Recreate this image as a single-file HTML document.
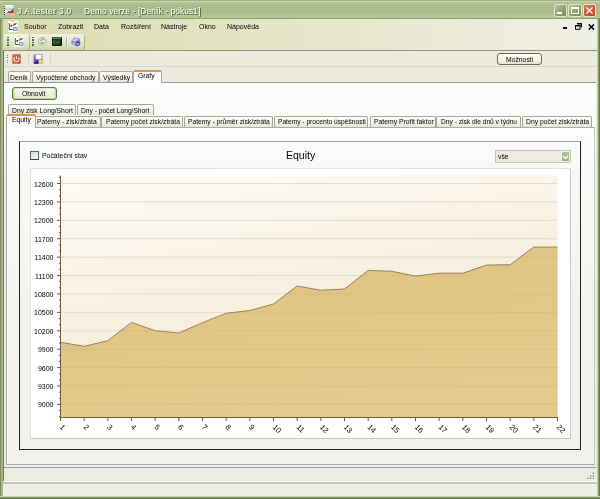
<!DOCTYPE html>
<html><head><meta charset="utf-8">
<style>
*{margin:0;padding:0;box-sizing:border-box}
html,body{width:600px;height:499px;overflow:hidden;background:#8a9c6a}
body{position:relative;font-family:"Liberation Sans",sans-serif;font-size:6.8px;color:#000}
.a{position:absolute}
.tx{will-change:transform;position:absolute;white-space:nowrap;font-size:6.8px;line-height:8px;color:#000}
#title{left:0;top:0;width:600px;height:19px;background:linear-gradient(#9fb17f 0,#9fb17f 1px,#cad6ab 1px,#cad6ab 2px,#b8c798 2px,#acbc8a 5px,#abbb8a 13px,#b8c799 16px,#b4c495 18px,#8c9c6c 18px)}
.tt{will-change:transform;position:absolute;top:5.5px;font-size:8.8px;line-height:11px;color:#fff;text-shadow:1px 1px 0 #4a562f;white-space:pre}
#winL{left:0;top:19px;width:3px;height:480px;background:linear-gradient(90deg,#7a9458 0,#7a9458 1px,#a3b585 1px,#a3b585 2px,#b0b495 2px)}
#winR{left:597px;top:19px;width:3px;height:480px;background:linear-gradient(90deg,#c8d0b0 0,#c8d0b0 1px,#8a9c6a 1px,#8a9c6a 2px,#627a44 2px)}
#winB{left:0;top:496px;width:600px;height:3px;background:linear-gradient(#c8d0b0 0,#c8d0b0 1px,#8a9c6a 1px,#8a9c6a 2px,#627a44 2px)}
#menubar{left:3px;top:19px;width:594px;height:31px;background:linear-gradient(90deg,#dcdcb0,#f0efe4)}
#mdi{left:3px;top:50px;width:594px;height:432px;background:#ecebde;border-left:1px solid #6e7560;border-top:1px solid #8f8f82}
.tb{height:16px;border-radius:3px;background:linear-gradient(#f2f4e4,#e3e8cc 50%,#cdd6ae);box-shadow:1px 1px 0 #a8b08a}
.grip{width:1.5px;height:9px;background:repeating-linear-gradient(#56643f 0,#56643f 1.2px,transparent 1.2px,transparent 2.5px)}
.sep{width:1px;height:12px;background:#d2d0c2;box-shadow:1px 0 0 #f8f8f2}
.btn{position:absolute;border:1px solid #5f6e47;border-radius:3px;background:linear-gradient(#fefef8,#f2f1e2 70%,#e3e1cc)}
.tab{position:absolute;height:11px;border:1px solid #a6a8a0;border-bottom:none;border-radius:2px 2px 0 0;background:linear-gradient(#fefefc,#f3f2e8 60%,#e9e7da)}
.tab.sel{background:#fcfcfe;border-top:2px solid #dc9550;z-index:2}
#panel{left:4px;top:82px;width:592px;height:386px;border-top:1px solid #9a9c98;border-bottom:1px solid #9a9c98;background:linear-gradient(#fcfcfe 0,#fafafa 40px,#eef0ec 100px,#eef0ec)}
#panel2{left:6px;top:127px;width:589px;height:338px;border:1px solid #a6a6aa;border-top-color:#a8aaa8;border-right-color:#c6c6c4;border-bottom-color:#a8aaa8;background:linear-gradient(#fcfcfe 0,#f7f7f5 60px,#f3f3ee 170px,#f2f1ec);box-shadow:inset 1px 1px 0 #fff}
#frame{left:19px;top:141px;width:562px;height:309px;border:1px solid #202020;border-top-color:#a4a4a4;box-shadow:0 0 0 1px #f8f8f6}
#status1{left:4px;top:468px;width:593px;height:13px;background:#edece1}
#status2{left:3px;top:481px;width:594px;height:15px;background:linear-gradient(#f8f8f0 0,#f8f8f0 1px,#c6c5ba 1px,#c6c5ba 3px,#efeee4 3px,#efeee4)}
</style></head><body>
<div id="title" class="a">
<div class="tt" style="left:17px;font-size:8.4px;letter-spacing:0.38px">J.A.tester 3.0</div>
<div class="tt" style="left:83.5px;font-size:8.3px;letter-spacing:0.14px">Demo verze - [Deník - pokus1]</div>
<svg class="a" style="left:4px;top:5px" width="10" height="10" viewBox="0 0 10 10"><rect x="0.5" y="0" width="9" height="10" fill="#f4f8f8"/><rect x="0.5" y="2.5" width="9" height="3" fill="#a8e0e8"/><polygon points="2.5,8 5,6 6.5,6.5 9.5,3 9.5,8" fill="#d8181a"/><rect x="0.5" y="8" width="9" height="2" fill="#c8c8c0"/><g fill="#2c4040"><rect x="0" y="1" width="1" height="1"/><rect x="0" y="3" width="1" height="1"/><rect x="0" y="5" width="1" height="1"/><rect x="0" y="7" width="1" height="1"/><rect x="0" y="9" width="1" height="1"/></g></svg>
<div class="a" style="left:554px;top:4px;width:13px;height:13px;border:1px solid #dfe7cf;border-radius:2px;background:linear-gradient(135deg,#bcc8a0,#8c9c68 65%,#7a8a56)"><div class="a" style="left:2px;top:7px;width:5px;height:2px;background:#fff"></div></div>
<div class="a" style="left:568px;top:4px;width:14px;height:13px;border:1px solid #dfe7cf;border-radius:2px;background:linear-gradient(135deg,#bcc8a0,#8c9c68 65%,#7a8a56)"><div class="a" style="left:2px;top:2px;width:8px;height:7px;border:1px solid #fff;border-top-width:2px"></div></div>
<div class="a" style="left:583px;top:4px;width:13px;height:13px;border:1px solid #efe0c8;border-radius:2px;background:linear-gradient(135deg,#e07a58,#c8522e 65%,#b8452a)"><svg class="a" style="left:1px;top:1px" width="9" height="9" viewBox="0 0 9 9"><path d="M1.5 1.5L7.5 7.5M7.5 1.5L1.5 7.5" stroke="#fff" stroke-width="1.3"/></svg></div>
</div>
<div id="winL" class="a"></div><div id="winR" class="a"></div><div id="winB" class="a"></div>
<div id="menubar" class="a"></div>
<svg class="a" style="left:8px;top:21px" width="11" height="11" viewBox="0 0 11 11"><rect x="0" y="0" width="10" height="11" fill="#fbfcf8"/><rect x="3" y="0.3" width="3" height="0.8" fill="#b8b8b0"/><path d="M1.3 2v6.5h3.5" stroke="#3a3a3a" fill="none" stroke-width="0.9"/><circle cx="3.3" cy="4.8" r="0.9" fill="#111"/><path d="M5.3 4.8L6.3 2.8L7.5 3.5L8.4 1.8" stroke="#a84848" stroke-width="1.2" fill="none"/><rect x="5.2" y="6.2" width="4.3" height="3.8" fill="#6f8cb0"/><rect x="6" y="7.2" width="2.8" height="2" fill="#c8d8ec"/></svg>
<div class="tx" style="left:24px;top:23px;font-size:7px">Soubor</div>
<div class="tx" style="left:58px;top:23px;font-size:7px">Zobrazit</div>
<div class="tx" style="left:94px;top:23px;font-size:7px">Data</div>
<div class="tx" style="left:121px;top:23px;font-size:7px">Rozšíření</div>
<div class="tx" style="left:161px;top:23px;font-size:7px">Nástroje</div>
<div class="tx" style="left:199px;top:23px;font-size:7px">Okno</div>
<div class="tx" style="left:227px;top:23px;font-size:7px">Nápověda</div>
<div class="a" style="left:563px;top:27px;width:4px;height:2px;background:#000"></div>
<svg class="a" style="left:575px;top:23px" width="7" height="7" viewBox="0 0 7 7"><path d="M2 0.5h4.5v4" stroke="#000" fill="none" stroke-width="1"/><rect x="2" y="0" width="5" height="1.5" fill="#000"/><rect x="0.5" y="2.5" width="4.5" height="3.8" fill="none" stroke="#000" stroke-width="1"/><rect x="0" y="2" width="5.5" height="1.5" fill="#000"/></svg>
<svg class="a" style="left:588px;top:24px" width="7" height="6" viewBox="0 0 7 6"><path d="M0.8 0.5L6 5.5M6 0.5L0.8 5.5" stroke="#000" stroke-width="1.6"/></svg>
<div class="a tb" style="left:4px;top:34px;width:25px"></div>
<div class="a tb" style="left:30px;top:34px;width:54px"></div>
<div class="a grip" style="left:7px;top:37px"></div>
<div class="a grip" style="left:32px;top:37px"></div>
<svg class="a" style="left:14px;top:36px" width="11" height="11" viewBox="0 0 11 11"><rect x="0" y="0" width="10" height="11" fill="#fbfcf8"/><rect x="3" y="0.3" width="3" height="0.8" fill="#b8b8b0"/><path d="M1.3 2v6.5h3.5" stroke="#3a3a3a" fill="none" stroke-width="0.9"/><circle cx="3.3" cy="4.8" r="0.9" fill="#111"/><path d="M5.3 4.8L6.3 2.8L7.5 3.5L8.4 1.8" stroke="#a84848" stroke-width="1.2" fill="none"/><rect x="5.2" y="6.2" width="4.3" height="3.8" fill="#6f8cb0"/><rect x="6" y="7.2" width="2.8" height="2" fill="#c8d8ec"/></svg>
<svg class="a" style="left:38px;top:37px" width="9" height="9" viewBox="0 0 9 9"><circle cx="4.3" cy="4.3" r="3.7" fill="#f2f4ee" stroke="#a9b3a0" stroke-width="1.1"/><path d="M2.3 5.6C3.2 6.6 5 6.4 5.6 5.2M6.3 3C5.4 2 3.6 2.2 3 3.4" stroke="#4f8a48" fill="none" stroke-width="1"/><path d="M5.6 4.2l0.4 1.6l-1.5-0.3zM3 4.4L2.6 2.8l1.5 0.3z" fill="#4f8a48"/></svg>
<svg class="a" style="left:52px;top:37px" width="10" height="9" viewBox="0 0 10 9"><rect x="0" y="0" width="10" height="9" rx="0.8" fill="#101410"/><rect x="1" y="0.5" width="8" height="1.3" fill="#8a9088"/><rect x="1" y="2.2" width="8" height="5.8" fill="#1a3c1c"/><path d="M3.3 3.8a1.3 1.3 0 1 0 0 2.2M5 4.5v1.5M6.5 4.5v1.5" stroke="#58c060" stroke-width="0.7" fill="none"/></svg>
<div class="a" style="left:66px;top:37px;width:1px;height:10px;background:#a9b091;box-shadow:1px 0 0 #f6f8ee"></div>
<svg class="a" style="left:70px;top:36px" width="11" height="11" viewBox="0 0 11 11"><path d="M1 5.5L4.5 1.2L9.8 2.8L10.5 7.5L6.5 10.5L1.5 8z" fill="#8f92d8"/><path d="M2.5 5L5 2.3L8 3.2L6 5.3z" fill="#d0d2f4"/><path d="M3 7.2L5 6.2L6.2 7.5L4 8.5z" fill="#c4c6f0"/><circle cx="7.8" cy="7.6" r="2.4" fill="#2c3a98"/><path d="M6.6 6.8l0.5 1.8l0.7-1.2l0.7 1.2l0.5-1.8" stroke="#fff" stroke-width="0.6" fill="none"/></svg>
<div id="mdi" class="a"></div>
<div class="a" style="left:4px;top:66px;width:593px;height:1px;background:#d8d6cc"></div>
<div class="a grip" style="left:7px;top:55px;height:8px;width:1px;background:repeating-linear-gradient(#7c7c70 0,#7c7c70 1px,transparent 1px,transparent 2.5px)"></div>
<div class="a" style="left:12px;top:54px;width:9px;height:10px;border-radius:1.5px;background:linear-gradient(135deg,#d86a48,#c04a2c);box-shadow:inset 0 0 0 0.6px #e89a80"><svg class="a" style="left:0;top:0" width="9" height="10" viewBox="0 0 9 10"><path d="M2.83 3.21A2.6 2.6 0 1 0 6.17 3.21" stroke="#fbe8e0" fill="none" stroke-width="1.1"/><path d="M4.5 2.3v2.9" stroke="#fbe8e0" stroke-width="1"/></svg></div>
<div class="a" style="left:28px;top:53px;width:1px;height:12px;background:#d6d4c6"></div>
<svg class="a" style="left:33px;top:54px" width="10" height="10" viewBox="0 0 10 10"><defs><linearGradient id="sv" x1="0" y1="0" x2="0" y2="1"><stop offset="0" stop-color="#a0a0e0"/><stop offset="1" stop-color="#4040a8"/></linearGradient></defs><rect x="0.5" y="0" width="9" height="10" rx="0.8" fill="url(#sv)"/><rect x="3" y="0.8" width="5.5" height="4.5" fill="#fcfcff"/><path d="M1.5 9.5L5 5.5L6 9.5z" fill="#20206a"/><rect x="5.5" y="5.8" width="4.2" height="4.2" rx="0.6" fill="#e6c45a"/><rect x="6.3" y="6.5" width="2.6" height="1.4" fill="#f8ecb0"/></svg>
<div class="a" style="left:50px;top:53px;width:1px;height:12px;background:#d6d4c6"></div>
<div class="btn" style="left:497px;top:52.5px;width:45px;height:12.5px"><div class="tx" style="left:8px;top:2px">Možnosti</div></div>
<div id="panel" class="a"></div>
<div class="tab" style="left:8px;top:71px;width:23px"><div class="tx" style="left:0.5px;top:2px">Deník</div></div>
<div class="tab" style="left:32px;top:71px;width:67px"><div class="tx" style="left:2.7px;top:2px">Vypočtené obchody</div></div>
<div class="tab" style="left:99px;top:71px;width:34px"><div class="tx" style="left:3px;top:2px">Výsledky</div></div>
<div class="tab sel" style="left:133px;top:70px;width:29px;height:13px"><div class="tx" style="left:3.5px;top:0px">Grafy</div></div>
<div class="btn" style="left:12px;top:87px;width:45px;height:12.5px;border-color:#5c7544;background:linear-gradient(#f6f7ee,#eeeee2 60%,#e2e4d0);box-shadow:inset 1.5px 0 0 #c4de9c,inset -1.5px 0 0 #c4de9c,inset 0 1px 0 #dcebc4,inset 0 -1px 0 #b4d08c"><div class="tx" style="left:9px;top:2px">Obnovit</div></div>
<div id="panel2" class="a"></div>
<div class="tab" style="left:8px;top:104px;width:68px"><div class="tx" style="left:3px;top:2px">Dny zisk Long/Short</div></div>
<div class="tab" style="left:77px;top:104px;width:77px"><div class="tx" style="left:2.8px;top:2px;font-size:6.65px">Dny - počet Long/Short</div></div>
<div class="tab sel" style="left:6px;top:114px;width:30px;height:14px"><div class="tx" style="left:5px;top:-0.5px">Equity</div></div>
<div class="tab" style="left:35px;top:116px;width:66px"><div class="tx" style="left:1.3px;top:1px">Patemy - zisk/ztráta</div></div>
<div class="tab" style="left:101px;top:116px;width:82px"><div class="tx" style="left:3.5px;top:1px">Patemy počet zisk/ztráta</div></div>
<div class="tab" style="left:184px;top:116px;width:89px"><div class="tx" style="left:2.5px;top:1px;font-size:6.7px">Patemy - průměr zisk/ztráta</div></div>
<div class="tab" style="left:274px;top:116px;width:94px"><div class="tx" style="left:2.5px;top:1px;font-size:6.65px">Patemy - procento úspěšnosti</div></div>
<div class="tab" style="left:370px;top:116px;width:66px"><div class="tx" style="left:2.8px;top:1px">Patemy Profit faktor</div></div>
<div class="tab" style="left:436px;top:116px;width:85px"><div class="tx" style="left:3.8px;top:1px;font-size:6.65px">Dny - zisk dle dnů v týdnu</div></div>
<div class="tab" style="left:522px;top:116px;width:70px"><div class="tx" style="left:2.5px;top:1px">Dny počet zisk/ztráta</div></div>
<div id="frame" class="a"></div>
<div class="a" style="left:30px;top:151px;width:8.5px;height:9px;border:1px solid #56647a;border-bottom-color:#3a4656;background:linear-gradient(135deg,#d8d8d0,#fcfcfa)"></div>
<div class="tx" style="left:41.8px;top:152px;font-size:6.9px">Počáteční stav</div>
<div class="tx" style="left:286px;top:149px;font-size:10.5px;line-height:13px">Equity</div>
<div class="a" style="left:495px;top:150px;width:76px;height:12.5px;border:1px solid #bfcba8;background:#eeece2"><div class="tx" style="left:1.5px;top:1.5px">vše</div><div class="a" style="left:65px;top:0;width:9px;height:10.5px;border:1px solid #f0f2e6;background:linear-gradient(#b2c298,#97ab7b)"><svg class="a" style="left:0;top:1.5px" width="7" height="7" viewBox="0 0 7 7"><path d="M1 2l2.5 2.5L6 2" stroke="#fff" fill="none" stroke-width="1.3"/></svg></div></div>
<svg class="a" style="left:0;top:0;will-change:transform" width="600" height="499" viewBox="0 0 600 499">
<defs><linearGradient id="pbg" x1="0" y1="0" x2="0.35" y2="1"><stop offset="0" stop-color="#fdfaf4"/><stop offset="1" stop-color="#f4e8d2"/></linearGradient>
<linearGradient id="afill" x1="0" y1="0" x2="0.4" y2="1"><stop offset="0" stop-color="#dfc283"/><stop offset="1" stop-color="#e4c98c"/></linearGradient></defs>
<rect x="30.5" y="168.5" width="540" height="270" fill="#fff" stroke="#e2e2dc" stroke-width="1"/><path d="M570.5 168.5V438.5H30.5" fill="none" stroke="#c9c9c3" stroke-width="1"/>
<rect x="60.5" y="175.5" width="497.0" height="242.0" fill="url(#pbg)"/>
<line x1="60.5" y1="183.50" x2="557.5" y2="183.50" stroke="#e6dcc8" stroke-width="1"/>
<line x1="60.5" y1="201.91" x2="557.5" y2="201.91" stroke="#e6dcc8" stroke-width="1"/>
<line x1="60.5" y1="220.32" x2="557.5" y2="220.32" stroke="#e6dcc8" stroke-width="1"/>
<line x1="60.5" y1="238.73" x2="557.5" y2="238.73" stroke="#e6dcc8" stroke-width="1"/>
<line x1="60.5" y1="257.14" x2="557.5" y2="257.14" stroke="#e6dcc8" stroke-width="1"/>
<line x1="60.5" y1="275.55" x2="557.5" y2="275.55" stroke="#e6dcc8" stroke-width="1"/>
<line x1="60.5" y1="293.96" x2="557.5" y2="293.96" stroke="#e6dcc8" stroke-width="1"/>
<line x1="60.5" y1="312.37" x2="557.5" y2="312.37" stroke="#e6dcc8" stroke-width="1"/>
<line x1="60.5" y1="330.78" x2="557.5" y2="330.78" stroke="#e6dcc8" stroke-width="1"/>
<line x1="60.5" y1="349.19" x2="557.5" y2="349.19" stroke="#e6dcc8" stroke-width="1"/>
<line x1="60.5" y1="367.60" x2="557.5" y2="367.60" stroke="#e6dcc8" stroke-width="1"/>
<line x1="60.5" y1="386.01" x2="557.5" y2="386.01" stroke="#e6dcc8" stroke-width="1"/>
<line x1="60.5" y1="404.42" x2="557.5" y2="404.42" stroke="#e6dcc8" stroke-width="1"/>
<clipPath id="ac"><polygon points="60.5,417.5 60.5,342.3 84.2,346.3 107.8,340.7 131.5,322.4 155.2,330.7 178.8,333.0 202.5,322.7 226.2,313.3 249.8,310.5 273.5,304.0 297.2,286.0 320.8,290.3 344.5,289.0 368.2,270.4 391.8,271.3 415.5,276.1 439.2,273.2 462.8,273.2 486.5,265.1 510.2,264.7 533.8,247.1 557.5,247.1 557.5,417.5"/></clipPath>
<polygon points="60.5,417.5 60.5,342.3 84.2,346.3 107.8,340.7 131.5,322.4 155.2,330.7 178.8,333.0 202.5,322.7 226.2,313.3 249.8,310.5 273.5,304.0 297.2,286.0 320.8,290.3 344.5,289.0 368.2,270.4 391.8,271.3 415.5,276.1 439.2,273.2 462.8,273.2 486.5,265.1 510.2,264.7 533.8,247.1 557.5,247.1 557.5,417.5" fill="url(#afill)"/>
<line x1="60.5" y1="257.14" x2="557.5" y2="257.14" stroke="#d9be80" stroke-width="1" clip-path="url(#ac)"/>
<line x1="60.5" y1="275.55" x2="557.5" y2="275.55" stroke="#d9be80" stroke-width="1" clip-path="url(#ac)"/>
<line x1="60.5" y1="293.96" x2="557.5" y2="293.96" stroke="#d9be80" stroke-width="1" clip-path="url(#ac)"/>
<line x1="60.5" y1="312.37" x2="557.5" y2="312.37" stroke="#d9be80" stroke-width="1" clip-path="url(#ac)"/>
<line x1="60.5" y1="330.78" x2="557.5" y2="330.78" stroke="#d9be80" stroke-width="1" clip-path="url(#ac)"/>
<line x1="60.5" y1="349.19" x2="557.5" y2="349.19" stroke="#d9be80" stroke-width="1" clip-path="url(#ac)"/>
<line x1="60.5" y1="367.60" x2="557.5" y2="367.60" stroke="#d9be80" stroke-width="1" clip-path="url(#ac)"/>
<line x1="60.5" y1="386.01" x2="557.5" y2="386.01" stroke="#d9be80" stroke-width="1" clip-path="url(#ac)"/>
<line x1="60.5" y1="404.42" x2="557.5" y2="404.42" stroke="#d9be80" stroke-width="1" clip-path="url(#ac)"/>
<polyline points="60.5,342.3 84.2,346.3 107.8,340.7 131.5,322.4 155.2,330.7 178.8,333.0 202.5,322.7 226.2,313.3 249.8,310.5 273.5,304.0 297.2,286.0 320.8,290.3 344.5,289.0 368.2,270.4 391.8,271.3 415.5,276.1 439.2,273.2 462.8,273.2 486.5,265.1 510.2,264.7 533.8,247.1 557.5,247.1" fill="none" stroke="#9a8252" stroke-width="1"/>
<line x1="60.5" y1="175.5" x2="60.5" y2="418.0" stroke="#675b44" stroke-width="1"/>
<line x1="60.5" y1="417.5" x2="558.0" y2="417.5" stroke="#675b44" stroke-width="1"/>
<line x1="57" y1="183.50" x2="60.5" y2="183.50" stroke="#675b44" stroke-width="1"/>
<text x="53.5" y="186.5" text-anchor="end" font-size="7" font-family="Liberation Sans" fill="#000">12600</text>
<line x1="57" y1="201.91" x2="60.5" y2="201.91" stroke="#675b44" stroke-width="1"/>
<text x="53.5" y="204.9" text-anchor="end" font-size="7" font-family="Liberation Sans" fill="#000">12300</text>
<line x1="57" y1="220.32" x2="60.5" y2="220.32" stroke="#675b44" stroke-width="1"/>
<text x="53.5" y="223.3" text-anchor="end" font-size="7" font-family="Liberation Sans" fill="#000">12000</text>
<line x1="57" y1="238.73" x2="60.5" y2="238.73" stroke="#675b44" stroke-width="1"/>
<text x="53.5" y="241.7" text-anchor="end" font-size="7" font-family="Liberation Sans" fill="#000">11700</text>
<line x1="57" y1="257.14" x2="60.5" y2="257.14" stroke="#675b44" stroke-width="1"/>
<text x="53.5" y="260.1" text-anchor="end" font-size="7" font-family="Liberation Sans" fill="#000">11400</text>
<line x1="57" y1="275.55" x2="60.5" y2="275.55" stroke="#675b44" stroke-width="1"/>
<text x="53.5" y="278.6" text-anchor="end" font-size="7" font-family="Liberation Sans" fill="#000">11100</text>
<line x1="57" y1="293.96" x2="60.5" y2="293.96" stroke="#675b44" stroke-width="1"/>
<text x="53.5" y="297.0" text-anchor="end" font-size="7" font-family="Liberation Sans" fill="#000">10800</text>
<line x1="57" y1="312.37" x2="60.5" y2="312.37" stroke="#675b44" stroke-width="1"/>
<text x="53.5" y="315.4" text-anchor="end" font-size="7" font-family="Liberation Sans" fill="#000">10500</text>
<line x1="57" y1="330.78" x2="60.5" y2="330.78" stroke="#675b44" stroke-width="1"/>
<text x="53.5" y="333.8" text-anchor="end" font-size="7" font-family="Liberation Sans" fill="#000">10200</text>
<line x1="57" y1="349.19" x2="60.5" y2="349.19" stroke="#675b44" stroke-width="1"/>
<text x="53.5" y="352.2" text-anchor="end" font-size="7" font-family="Liberation Sans" fill="#000">9900</text>
<line x1="57" y1="367.60" x2="60.5" y2="367.60" stroke="#675b44" stroke-width="1"/>
<text x="53.5" y="370.6" text-anchor="end" font-size="7" font-family="Liberation Sans" fill="#000">9600</text>
<line x1="57" y1="386.01" x2="60.5" y2="386.01" stroke="#675b44" stroke-width="1"/>
<text x="53.5" y="389.0" text-anchor="end" font-size="7" font-family="Liberation Sans" fill="#000">9300</text>
<line x1="57" y1="404.42" x2="60.5" y2="404.42" stroke="#675b44" stroke-width="1"/>
<text x="53.5" y="407.4" text-anchor="end" font-size="7" font-family="Liberation Sans" fill="#000">9000</text>
<line x1="59" y1="177.36" x2="60.5" y2="177.36" stroke="#675b44" stroke-width="1"/>
<line x1="59" y1="189.64" x2="60.5" y2="189.64" stroke="#675b44" stroke-width="1"/>
<line x1="59" y1="195.77" x2="60.5" y2="195.77" stroke="#675b44" stroke-width="1"/>
<line x1="59" y1="208.05" x2="60.5" y2="208.05" stroke="#675b44" stroke-width="1"/>
<line x1="59" y1="214.18" x2="60.5" y2="214.18" stroke="#675b44" stroke-width="1"/>
<line x1="59" y1="226.46" x2="60.5" y2="226.46" stroke="#675b44" stroke-width="1"/>
<line x1="59" y1="232.59" x2="60.5" y2="232.59" stroke="#675b44" stroke-width="1"/>
<line x1="59" y1="244.87" x2="60.5" y2="244.87" stroke="#675b44" stroke-width="1"/>
<line x1="59" y1="251.00" x2="60.5" y2="251.00" stroke="#675b44" stroke-width="1"/>
<line x1="59" y1="263.28" x2="60.5" y2="263.28" stroke="#675b44" stroke-width="1"/>
<line x1="59" y1="269.41" x2="60.5" y2="269.41" stroke="#675b44" stroke-width="1"/>
<line x1="59" y1="281.69" x2="60.5" y2="281.69" stroke="#675b44" stroke-width="1"/>
<line x1="59" y1="287.82" x2="60.5" y2="287.82" stroke="#675b44" stroke-width="1"/>
<line x1="59" y1="300.10" x2="60.5" y2="300.10" stroke="#675b44" stroke-width="1"/>
<line x1="59" y1="306.23" x2="60.5" y2="306.23" stroke="#675b44" stroke-width="1"/>
<line x1="59" y1="318.51" x2="60.5" y2="318.51" stroke="#675b44" stroke-width="1"/>
<line x1="59" y1="324.64" x2="60.5" y2="324.64" stroke="#675b44" stroke-width="1"/>
<line x1="59" y1="336.92" x2="60.5" y2="336.92" stroke="#675b44" stroke-width="1"/>
<line x1="59" y1="343.05" x2="60.5" y2="343.05" stroke="#675b44" stroke-width="1"/>
<line x1="59" y1="355.33" x2="60.5" y2="355.33" stroke="#675b44" stroke-width="1"/>
<line x1="59" y1="361.46" x2="60.5" y2="361.46" stroke="#675b44" stroke-width="1"/>
<line x1="59" y1="373.74" x2="60.5" y2="373.74" stroke="#675b44" stroke-width="1"/>
<line x1="59" y1="379.87" x2="60.5" y2="379.87" stroke="#675b44" stroke-width="1"/>
<line x1="59" y1="392.15" x2="60.5" y2="392.15" stroke="#675b44" stroke-width="1"/>
<line x1="59" y1="398.28" x2="60.5" y2="398.28" stroke="#675b44" stroke-width="1"/>
<line x1="59" y1="410.56" x2="60.5" y2="410.56" stroke="#675b44" stroke-width="1"/>
<line x1="59" y1="416.69" x2="60.5" y2="416.69" stroke="#675b44" stroke-width="1"/>
<line x1="60.50" y1="417.5" x2="60.50" y2="421" stroke="#675b44" stroke-width="1"/>
<text transform="translate(59.3,427.5) rotate(45)" font-size="7.6" font-family="Liberation Sans" fill="#000">1</text>
<line x1="84.17" y1="417.5" x2="84.17" y2="421" stroke="#675b44" stroke-width="1"/>
<text transform="translate(83.0,427.5) rotate(45)" font-size="7.6" font-family="Liberation Sans" fill="#000">2</text>
<line x1="107.83" y1="417.5" x2="107.83" y2="421" stroke="#675b44" stroke-width="1"/>
<text transform="translate(106.6,427.5) rotate(45)" font-size="7.6" font-family="Liberation Sans" fill="#000">3</text>
<line x1="131.50" y1="417.5" x2="131.50" y2="421" stroke="#675b44" stroke-width="1"/>
<text transform="translate(130.3,427.5) rotate(45)" font-size="7.6" font-family="Liberation Sans" fill="#000">4</text>
<line x1="155.17" y1="417.5" x2="155.17" y2="421" stroke="#675b44" stroke-width="1"/>
<text transform="translate(154.0,427.5) rotate(45)" font-size="7.6" font-family="Liberation Sans" fill="#000">5</text>
<line x1="178.84" y1="417.5" x2="178.84" y2="421" stroke="#675b44" stroke-width="1"/>
<text transform="translate(177.6,427.5) rotate(45)" font-size="7.6" font-family="Liberation Sans" fill="#000">6</text>
<line x1="202.50" y1="417.5" x2="202.50" y2="421" stroke="#675b44" stroke-width="1"/>
<text transform="translate(201.3,427.5) rotate(45)" font-size="7.6" font-family="Liberation Sans" fill="#000">7</text>
<line x1="226.17" y1="417.5" x2="226.17" y2="421" stroke="#675b44" stroke-width="1"/>
<text transform="translate(225.0,427.5) rotate(45)" font-size="7.6" font-family="Liberation Sans" fill="#000">8</text>
<line x1="249.84" y1="417.5" x2="249.84" y2="421" stroke="#675b44" stroke-width="1"/>
<text transform="translate(248.6,427.5) rotate(45)" font-size="7.6" font-family="Liberation Sans" fill="#000">9</text>
<line x1="273.50" y1="417.5" x2="273.50" y2="421" stroke="#675b44" stroke-width="1"/>
<text transform="translate(272.3,427.5) rotate(45)" font-size="7.6" font-family="Liberation Sans" fill="#000">10</text>
<line x1="297.17" y1="417.5" x2="297.17" y2="421" stroke="#675b44" stroke-width="1"/>
<text transform="translate(296.0,427.5) rotate(45)" font-size="7.6" font-family="Liberation Sans" fill="#000">11</text>
<line x1="320.84" y1="417.5" x2="320.84" y2="421" stroke="#675b44" stroke-width="1"/>
<text transform="translate(319.6,427.5) rotate(45)" font-size="7.6" font-family="Liberation Sans" fill="#000">12</text>
<line x1="344.50" y1="417.5" x2="344.50" y2="421" stroke="#675b44" stroke-width="1"/>
<text transform="translate(343.3,427.5) rotate(45)" font-size="7.6" font-family="Liberation Sans" fill="#000">13</text>
<line x1="368.17" y1="417.5" x2="368.17" y2="421" stroke="#675b44" stroke-width="1"/>
<text transform="translate(367.0,427.5) rotate(45)" font-size="7.6" font-family="Liberation Sans" fill="#000">14</text>
<line x1="391.84" y1="417.5" x2="391.84" y2="421" stroke="#675b44" stroke-width="1"/>
<text transform="translate(390.6,427.5) rotate(45)" font-size="7.6" font-family="Liberation Sans" fill="#000">15</text>
<line x1="415.50" y1="417.5" x2="415.50" y2="421" stroke="#675b44" stroke-width="1"/>
<text transform="translate(414.3,427.5) rotate(45)" font-size="7.6" font-family="Liberation Sans" fill="#000">16</text>
<line x1="439.17" y1="417.5" x2="439.17" y2="421" stroke="#675b44" stroke-width="1"/>
<text transform="translate(438.0,427.5) rotate(45)" font-size="7.6" font-family="Liberation Sans" fill="#000">17</text>
<line x1="462.84" y1="417.5" x2="462.84" y2="421" stroke="#675b44" stroke-width="1"/>
<text transform="translate(461.6,427.5) rotate(45)" font-size="7.6" font-family="Liberation Sans" fill="#000">18</text>
<line x1="486.51" y1="417.5" x2="486.51" y2="421" stroke="#675b44" stroke-width="1"/>
<text transform="translate(485.3,427.5) rotate(45)" font-size="7.6" font-family="Liberation Sans" fill="#000">19</text>
<line x1="510.17" y1="417.5" x2="510.17" y2="421" stroke="#675b44" stroke-width="1"/>
<text transform="translate(509.0,427.5) rotate(45)" font-size="7.6" font-family="Liberation Sans" fill="#000">20</text>
<line x1="533.84" y1="417.5" x2="533.84" y2="421" stroke="#675b44" stroke-width="1"/>
<text transform="translate(532.6,427.5) rotate(45)" font-size="7.6" font-family="Liberation Sans" fill="#000">21</text>
<line x1="557.51" y1="417.5" x2="557.51" y2="421" stroke="#675b44" stroke-width="1"/>
<text transform="translate(556.3,427.5) rotate(45)" font-size="7.6" font-family="Liberation Sans" fill="#000">22</text>
</svg>
<div id="status1" class="a"></div>
<div id="status2" class="a"></div>
<svg class="a" style="left:580px;top:465px" width="20" height="20" viewBox="580 465 20 20"><g fill="#fafaf6"><rect x="593.3" y="473.2" width="1.5" height="1.5"/><rect x="590.6" y="475.8" width="1.5" height="1.5"/><rect x="593.3" y="475.8" width="1.5" height="1.5"/><rect x="588.0" y="478.2" width="1.5" height="1.5"/><rect x="590.6" y="478.2" width="1.5" height="1.5"/><rect x="593.3" y="478.2" width="1.5" height="1.5"/></g><g fill="#85857a"><rect x="592.7" y="472.6" width="1.4" height="1.4"/><rect x="590.0" y="475.2" width="1.4" height="1.4"/><rect x="592.7" y="475.2" width="1.4" height="1.4"/><rect x="587.4" y="477.6" width="1.4" height="1.4"/><rect x="590.0" y="477.6" width="1.4" height="1.4"/><rect x="592.7" y="477.6" width="1.4" height="1.4"/></g></svg>
</body></html>
